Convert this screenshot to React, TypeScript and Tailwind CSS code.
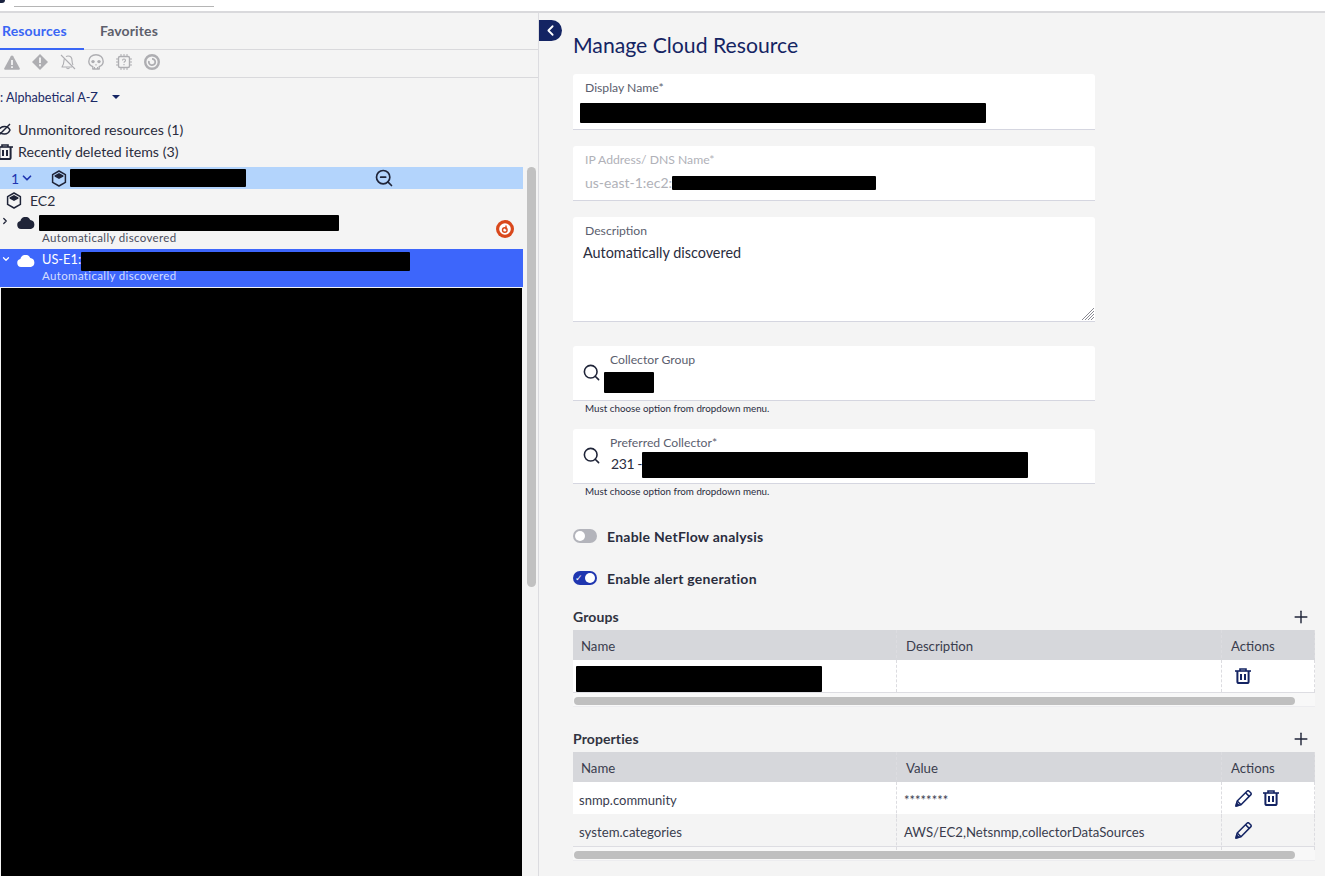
import { ChevronDown, ChevronLeft, ChevronRight, Plus, Search, ZoomOut } from "lucide-react";
import type { ReactNode } from "react";

const font = { fontFamily: '"Lato", "Noto Sans", sans-serif' };

const TrashIcon = ({ size = 16 }: { size?: number }) => (
  <svg width={size} height={size} viewBox="0 0 16 16" fill="none" stroke="currentColor" strokeWidth="2">
    <path d="M0 3h16" strokeWidth="1.6" />
    <path d="M5 3V1h6v2" strokeWidth="1.6" />
    <path d="M2.4 3v10.4c0 1 .6 1.6 1.6 1.6h8c1 0 1.6-.6 1.6-1.6V3" />
    <path d="M6 6v6M10 6v6" />
  </svg>
);

const PencilIcon = () => (
  <svg width="17" height="17" viewBox="0 0 17 17" fill="none" stroke="currentColor" strokeWidth="1.5" strokeLinejoin="round">
    <path d="M1 16l1.2-5L12 1.2c.7-.6 1.5-.6 2.1 0l1.6 1.6c.6.7.6 1.5 0 2.1L6 14.8 1 16z" />
    <path d="M2.2 11L6 14.8M10.6 2.8l3.6 3.6" />
    <path d="M1 16l.7-2.8 2.1 2.1L1 16z" fill="currentColor" />
  </svg>
);

const CubeIcon = ({ className = "" }: { className?: string }) => (
  <svg className={className} width="16" height="17" viewBox="0 0 16 17" fill="none" stroke="#1f2438" strokeWidth="1.5" strokeLinejoin="round">
    <path d="M8 1l6.4 3.6v7.8L8 16l-6.4-3.6V4.6L8 1z" />
    <path d="M4.2 6L8 3.8 11.8 6 8 8.2 4.2 6z" fill="#1f2438" />
  </svg>
);

const CloudIcon = ({ color }: { color: string }) => (
  <svg width="18" height="12" viewBox="0 0 18 12" fill={color}>
    <path d="M4 12a4 4 0 0 1-.6-7.9A5.2 5.2 0 0 1 13.3 3 4.6 4.6 0 0 1 14 12H4z" />
  </svg>
);

const Redact = ({ className }: { className: string }) => <div className={`bg-black rounded-[1px] ${className}`} />;

const Field = ({ label, muted, className, children }: { label: string; muted?: boolean; className: string; children: ReactNode }) => (
  <div className={`bg-white rounded-t-[3px] border-b border-[#d5d6e0] ${className}`}>
    <div className={`pl-3 pt-[6px] text-[12.2px] leading-[15px] ${muted ? "text-[#b0b1b8]" : "text-[#5b5e6e]"}`}>{label}</div>
    {children}
  </div>
);

const SearchField = ({ label, children }: { label: string; children: ReactNode }) => (
  <div className="h-[55px] bg-white rounded-t-[3px] border-b border-[#d5d6e0] flex">
    <div className="w-[37px] pl-[9px] pt-[17px]">
      <Search size={19} color="#1f2438" strokeWidth={2} />
    </div>
    <div className="flex-1">
      <div className="pt-[6px] text-[12.2px] leading-[15px] text-[#5b5e6e]">{label}</div>
      {children}
    </div>
  </div>
);

const Help = () => (
  <div className="pl-3 pt-[1px] text-[9.8px] leading-[12px] text-[#2a2d3e]">Must choose option from dropdown menu.</div>
);

const Cell = ({ className = "", children }: { className?: string; children?: ReactNode }) => (
  <div className={`border-r border-dashed border-[#dcdce0] h-full ${className}`}>{children}</div>
);

const TableHeader = ({ second }: { second: string }) => (
  <div className="grid grid-cols-[324px_325px_93px] h-[30px] bg-[#d6d7db] text-[13.2px] leading-[33px] text-[#3a3d4e]">
    <Cell className="pl-2 border-[#c4c5ca]">Name</Cell>
    <Cell className="pl-[9px] border-[#c4c5ca]">{second}</Cell>
    <Cell className="pl-[9px] border-[#c4c5ca]">Actions</Cell>
  </div>
);

const TableScroll = () => (
  <div className="h-[15px] bg-[#f8f8f8] border-t border-[#dddde2] pt-[4px] px-[1px] border-b-[#ececef] border-b">
    <div className="h-2 w-[721px] rounded-full bg-[#bfbfbf]" />
  </div>
);

const SectionHead = ({ title }: { title: string }) => (
  <div className="h-[27px] flex items-center justify-between text-[14px] font-bold text-[#30333f] pr-[4px]">
    <span className="tracking-[0.1px]">{title}</span>
    <Plus size={20} color="#1f2438" strokeWidth={1.7} />
  </div>
);

const Toggle = ({ on, label }: { on?: boolean; label: string }) => (
  <div className="flex items-center gap-[10px] h-[20px]">
    <div className={`w-6 h-[14px] rounded-full relative ${on ? "bg-[#1f36b0]" : "bg-[#b3b4bb]"}`}>
      {on && <span className="absolute left-[2px] top-0 text-[9px] leading-[14px] text-white">✓</span>}
      <div className={`absolute top-[2px] w-[10px] h-[10px] rounded-full bg-white ${on ? "right-[2px]" : "left-[2px]"}`} />
    </div>
    <span className="text-[14px] font-bold text-[#2a2d3e] tracking-[0.25px]">{label}</span>
  </div>
);

const App = () => {
  return (
    <div className="h-[876px] w-[1325px] overflow-hidden bg-[#f4f4f4] flex flex-col" style={font}>
      {/* top bar, cut off by the crop */}
      <div className="h-[13px] shrink-0 bg-white border-b-2 border-[#d9d9dc] flex items-start">
        <div className="w-[5px] h-[3px] bg-[#1a2340] rounded-br-full" />
        <div className="ml-[9px] w-[200px] h-[7px] bg-white border-b border-[#b5b5b5]" />
      </div>

      <div className="flex-1 flex min-h-0">
        {/* left panel */}
        <div className="w-[539px] shrink-0 border-r border-[#dcdce0] flex flex-col">
          <div className="h-[37px] shrink-0 flex border-b border-[#d9d9dc] text-[14px] font-bold tracking-[0.15px]">
            <div className="w-[84px] pl-[2px] pt-[7px] text-[#3a66f5] border-b-2 border-[#3a66f5] h-[37px]">Resources</div>
            <div className="pl-4 pt-[7px] text-[#5d5f6c]">Favorites</div>
          </div>

          <div className="h-[28px] shrink-0 border-b border-[#d9d9dc] flex items-center gap-[12px] pl-[4px] pb-[3px]">
            <svg width="16" height="15" viewBox="0 0 16 15"><path d="M8 .5c.6 0 .9.3 1.2.8l6.5 12c.4.8 0 1.4-.9 1.4H1.2c-.9 0-1.3-.6-.9-1.400l6.500-12C7.100.8 7.400.5 8 .5z" fill="#aeaeb2" /><path d="M8 5v5M8 11.200v1.800" stroke="#f4f4f4" strokeWidth="1.800" /></svg>
            <svg width="16" height="16" viewBox="0 0 16 16"><path d="M8 0l8 8-8 8-8-8 8-8z" fill="#aeaeb2" /><path d="M8 3.500v5.500M8 10.200v2" stroke="#f4f4f4" strokeWidth="1.800" /></svg>
            <svg width="16" height="16" viewBox="0 0 16 16" fill="none" stroke="#aeaeb2" strokeWidth="1.100" strokeLinejoin="round">
              <path d="M1 1l14 14" />
              <path d="M6 2.600C6.600 2.200 7.300 2 8 2c2.600 0 4 2 4 4.500 0 2.200.6 3.600 1 4.500M4.400 5c-.3.500-.4 1-.4 1.500 0 3-1 4.800-2 6.500h10" />
              <path d="M6.500 13.500c.3 1.700 2.700 1.700 3 0" />
            </svg>
            <svg width="16" height="16" viewBox="0 0 16 16" fill="none" stroke="#aeaeb2" strokeWidth="1.400">
              <path d="M4.800 15v-2.400C2.400 11.600.8 9.800.8 7.400.8 3.400 4 .8 8 .8s7.200 2.600 7.200 6.600c0 2.400-1.600 4.200-4 5.200V15H4.800z" strokeLinejoin="round" />
              <circle cx="5" cy="7.600" r="1.700" fill="#aeaeb2" stroke="none" />
              <circle cx="11" cy="7.600" r="1.700" fill="#aeaeb2" stroke="none" />
              <path d="M8 10v1.600M6.500 13v2M9.500 13v2" strokeWidth="1" />
            </svg>
            <svg width="16" height="16" viewBox="0 0 16 16" fill="none" stroke="#aeaeb2" strokeWidth="1.400">
              <rect x="2.500" y="2.500" width="11" height="11" rx="1.500" />
              <path d="M5 0v2.500M8 0v2.500M11 0v2.500M5 13.500V16M8 13.500V16M11 13.500V16M0 5h2.500M0 8h2.500M0 11h2.500M13.500 5H16M13.500 8H16M13.500 11H16" strokeWidth="1" />
              <path d="M6.500 6.500c0-2 3-2 3 0 0 1-1.500 1-1.500 2.300M8 10v1.200" strokeWidth="1.100" />
            </svg>
            <svg width="16" height="16" viewBox="0 0 16 16" fill="none" stroke="#aeaeb2" strokeWidth="2.400">
              <circle cx="8" cy="8" r="6.800" />
              <path d="M8 4.800a3.200 3.200 0 1 1-3 2.200" strokeWidth="1.800" />
            </svg>
          </div>

          <div className="h-[89px] shrink-0 text-[#2a2d3e]">
            <div className="h-[40px] flex items-center text-[12.6px] text-[#1b2a66]">
              <span>:&nbsp;Alphabetical A-Z</span>
              <span className="ml-[14px] mb-[3px] border-x-[4px] border-x-transparent border-t-[4px] border-t-[#142463]" />
            </div>
            <div className="h-[22px] flex items-center text-[14.2px] gap-[5px] pt-[2px] overflow-hidden">
              <svg className="-ml-[3px] shrink-0" width="16" height="16" viewBox="0 0 16 16" fill="none" stroke="#1f2438" strokeWidth="1.500">
                <path d="M.5 9c2-3 4.500-4.500 7-4.500S12 6 13 8c-1 2.500-3 4-5.500 4S2.500 11 .5 9z" />
                <path d="M1 14L13 2" />
              </svg>
              <span>Unmonitored resources (1)</span>
            </div>
            <div className="h-[21px] flex items-center text-[14.2px] gap-[5px] pt-[2px] overflow-hidden">
              <span className="-ml-[3px] shrink-0 text-[#1f2438]"><TrashIcon size={16} /></span>
              <span>Recently deleted items (3)</span>
            </div>
          </div>

          {/* tree */}
          <div className="flex-1 min-h-0 flex overflow-hidden">
            <div className="w-[523px] shrink-0">
              <div className="h-[22px] bg-[#b3d4fc] flex items-center text-[14px] text-[#1f36b0] pl-[11px] relative">
                <span>1</span>
                <ChevronDown size={14} strokeWidth={3} className="ml-[1px]" color="#1f36b0" />
                <CubeIcon className="ml-[17px]" />
                <Redact className="ml-[3px] w-[176px] h-[18px]" />
                <ZoomOut size={20} color="#1f2438" strokeWidth={2} className="absolute left-[374px] top-[1px]" />
              </div>
              <div className="h-[23px] flex items-center pl-[6px] text-[14px] text-[#2a2d3e]">
                <CubeIcon />
                <span className="ml-2">EC2</span>
              </div>
              <div className="h-[37px] relative">
                <div className="flex items-center h-[20px] pt-[1px]">
                  <ChevronRight size={10} strokeWidth={3} color="#1f2438" className="mb-[4px]" />
                  <div className="ml-[7px]"><CloudIcon color="#1f2438" /></div>
                  <Redact className="ml-[4px] w-[300px] h-[16px]" />
                </div>
                <div className="pl-[42px] text-[11.5px] leading-[14px] -mt-[1px] tracking-[0.35px] text-[#4a4d5c]">Automatically discovered</div>
                <svg className="absolute left-[496px] top-[8px]" width="18" height="18" viewBox="0 0 18 18">
                  <circle cx="9" cy="9" r="9" fill="#d9481c" />
                  <circle cx="9" cy="9" r="5.800" fill="#ffffff" />
                  <circle cx="8.800" cy="10" r="2.300" fill="none" stroke="#d9481c" strokeWidth="1.400" />
                  <path d="M10 5.500v4" stroke="#d9481c" strokeWidth="1.400" />
                </svg>
              </div>
              <div className="h-[38px] bg-[#3d66fb] text-white">
                <div className="flex items-center h-[22px] pt-[2px]">
                  <ChevronDown size={10} strokeWidth={3} color="#ffffff" className="ml-[1px] mb-[4px]" />
                  <div className="ml-[6px]"><CloudIcon color="#ffffff" /></div>
                  <span className="ml-[7px] w-[39px] text-[12.8px] -mt-[2px] whitespace-nowrap">US-E1:</span>
                  <Redact className="w-[329px] h-[19px]" />
                </div>
                <div className="pl-[42px] text-[11.5px] leading-[14px] -mt-[2px] tracking-[0.35px] text-[#d4deff]">Automatically discovered</div>
              </div>
              <div className="h-[600px] mt-[1px] ml-[1px] w-[521px] bg-black" />
            </div>
            <div className="ml-[4px] w-[9px] h-[420px] rounded-full bg-[#c1c1c1]" />
          </div>
        </div>

        {/* right panel */}
        <div className="flex-1 relative pl-[34px] pt-[20px] pr-[10px]">
          <div className="absolute left-0 top-[7px] w-[23px] h-[21px] bg-[#142463] rounded-r-full flex items-center justify-center">
            <ChevronLeft size={17} color="#ffffff" strokeWidth={2.500} />
          </div>

          <h1 className="text-[21.200px] leading-[25px] text-[#142463] font-normal">Manage Cloud Resource</h1>

          <div className="w-[522px] mt-[16px]">
            <Field label="Display Name*" className="h-[56px]">
              <Redact className="ml-[7px] mt-[8px] w-[406px] h-[20px]" />
            </Field>
            <Field label="IP Address/ DNS Name*" muted className="h-[55px] mt-[16px]">
              <div className="flex items-center pl-3 pt-[5px] text-[14px] text-[#b0b1b8]">
                <span>us-east-1:ec2:</span>
                <Redact className="w-[204px] h-[14px]" />
              </div>
            </Field>
            <div className="relative mt-[16px]">
              <Field label="Description" className="h-[105px]">
                <div className="pl-[10px] pt-[6px] text-[14.400px] leading-[18px] text-[#2a2d3e]">Automatically discovered</div>
              </Field>
              <svg className="absolute right-[1px] bottom-[2px]" width="13" height="13" viewBox="0 0 13 13" stroke="#8a8a92" strokeWidth="1">
                <path d="M1 13L13 1M4 13l9-9M7 13l6-6M10 13l3-3" />
              </svg>
            </div>

            <div className="mt-[24px]">
              <SearchField label="Collector Group">
                <Redact className="-ml-[6px] mt-[5px] w-[50px] h-[21px]" />
              </SearchField>
              <Help />
            </div>
            <div className="mt-[15px]">
              <SearchField label="Preferred Collector*">
                <div className="flex items-center text-[14px] text-[#2a2d3e] mt-[2px]">
                  <span className="w-[32px] pl-[1px] -mt-[4px] whitespace-nowrap tracking-[-0.4px]">231 -</span>
                  <Redact className="w-[386px] h-[26px]" />
                </div>
              </SearchField>
              <Help />
            </div>

            <div className="mt-[29px]"><Toggle label="Enable NetFlow analysis" /></div>
            <div className="mt-[22px]"><Toggle on label="Enable alert generation" /></div>
          </div>

          <div className="w-[742px] mt-[15px]">
            <SectionHead title="Groups" />
            <TableHeader second="Description" />
            <div className="grid grid-cols-[324px_325px_93px] h-[32px] bg-white">
              <Cell className="pl-[3px] pt-[6px]"><Redact className="w-[246px] h-[26px]" /></Cell>
              <Cell />
              <Cell className="pl-[13px] pt-[8px] text-[#142463]"><TrashIcon /></Cell>
            </div>
            <TableScroll />

            <div className="mt-[18px]"><SectionHead title="Properties" /></div>
            <TableHeader second="Value" />
            <div className="grid grid-cols-[324px_325px_93px] h-[32px] bg-white text-[13px] leading-[36px] text-[#3a3d4e]">
              <Cell className="pl-[6px]">snmp.community</Cell>
              <Cell className="pl-[7px]">********</Cell>
              <Cell className="pl-[13px] pt-[8px] text-[#142463] flex items-start gap-[11px]"><PencilIcon /><TrashIcon /></Cell>
            </div>
            <div className="grid grid-cols-[324px_325px_93px] h-[32px] text-[13.200px] leading-[36px] text-[#3a3d4e]">
              <Cell className="pl-[6px]">system.categories</Cell>
              <Cell className="pl-[7px]">AWS/EC2,Netsnmp,collectorDataSources</Cell>
              <Cell className="pl-[13px] pt-[8px] text-[#142463]"><PencilIcon /></Cell>
            </div>
            <TableScroll />
          </div>
        </div>
      </div>
    </div>
  );
};

export default App;
